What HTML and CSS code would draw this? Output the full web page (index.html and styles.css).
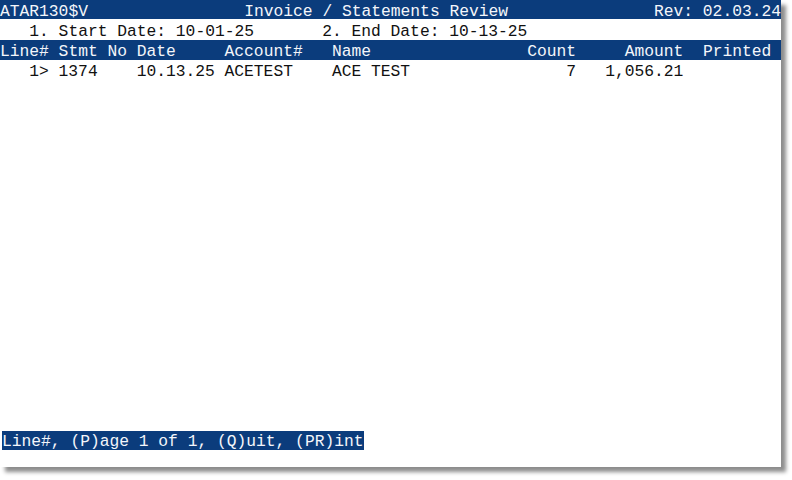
FILE: index.html
```html
<!DOCTYPE html>
<html lang="en">
<head>
<meta charset="utf-8">
<title>ATAR130$V - Invoice / Statements Review</title>
<link rel="stylesheet" href="styles.css">
</head>
<body>
<div class="screen">
  <div class="row bar title">
    <span class="t-prog">ATAR130$V</span>
    <span class="t-name">Invoice / Statements Review</span>
    <span class="t-rev">Rev: 02.03.24</span>
  </div>
  <div class="row params">
    <span class="p-start">1. Start Date: 10-01-25</span>
    <span class="p-end">2. End Date: 10-13-25</span>
  </div>
  <div class="row bar grid">
    <span class="c-line">Line#</span>
    <span class="c-stmt">Stmt No</span>
    <span class="c-date">Date</span>
    <span class="c-acct">Account#</span>
    <span class="c-name">Name</span>
    <span class="c-count">Count</span>
    <span class="c-amt">Amount</span>
    <span class="c-prt">Printed</span>
  </div>
  <div class="row grid">
    <span class="c-line">1&gt;</span>
    <span class="c-stmt">1374</span>
    <span class="c-date">10.13.25</span>
    <span class="c-acct">ACETEST</span>
    <span class="c-name">ACE TEST</span>
    <span class="c-count">7</span>
    <span class="c-amt">1,056.21</span>
    <span class="c-prt"></span>
  </div>
  <div class="spacer"></div>
  <div class="status">
    <span class="prompt">Line#, (P)age 1 of 1, (Q)uit, (PR)int</span>
  </div>
</div>
</body>
</html>
```

FILE: styles.css
```css
html, body {
  margin: 0;
  padding: 0;
  background: #ffffff;
}

body {
  min-height: 480px;
  box-sizing: border-box;
  padding-bottom: 13px;
}

.screen {
  width: 781px;
  height: 467px;
  background: #ffffff;
  box-shadow: 5px 5px 4px rgba(0, 0, 0, 0.45);
  display: flex;
  flex-direction: column;
  overflow: hidden;
  font-family: "Liberation Mono", "DejaVu Sans Mono", monospace;
  font-size: 16.3px;
  color: #111111;
}

.row {
  height: 20px;
  box-sizing: border-box;
  padding-top: 3px;
  line-height: 17px;
  white-space: pre;
  display: flex;
  flex-shrink: 0;
}

.bar {
  background: #0b3c7c;
  color: #f4f6fa;
}

.title {
  height: 19px;
  margin-bottom: 1px;
}

.t-prog {
  width: 25ch;
}

.t-name {
  flex: 1;
}

.t-rev {
  width: 13ch;
}

.p-start {
  width: 30ch;
  padding-left: 3ch;
}

.p-end {
  width: 47ch;
}

.grid .c-line {
  width: 5ch;
  margin-right: 1ch;
  text-align: right;
}

.grid .c-stmt { width: 8ch; }
.grid .c-date { width: 9ch; }
.grid .c-acct { width: 11ch; }
.grid .c-name { width: 20ch; }

.grid .c-count {
  width: 5ch;
  text-align: right;
}

.grid .c-amt {
  width: 11ch;
  text-align: right;
}

.grid .c-prt {
  width: 8ch;
  padding-left: 2ch;
}

.spacer {
  flex: 1;
}

.status {
  height: 36px;
  flex-shrink: 0;
  padding-left: 2px;
  box-sizing: border-box;
}

.prompt {
  display: inline-block;
  height: 19px;
  box-sizing: border-box;
  padding-top: 2px;
  line-height: 17px;
  white-space: pre;
  background: #0b3c7c;
  color: #f4f6fa;
}
```
